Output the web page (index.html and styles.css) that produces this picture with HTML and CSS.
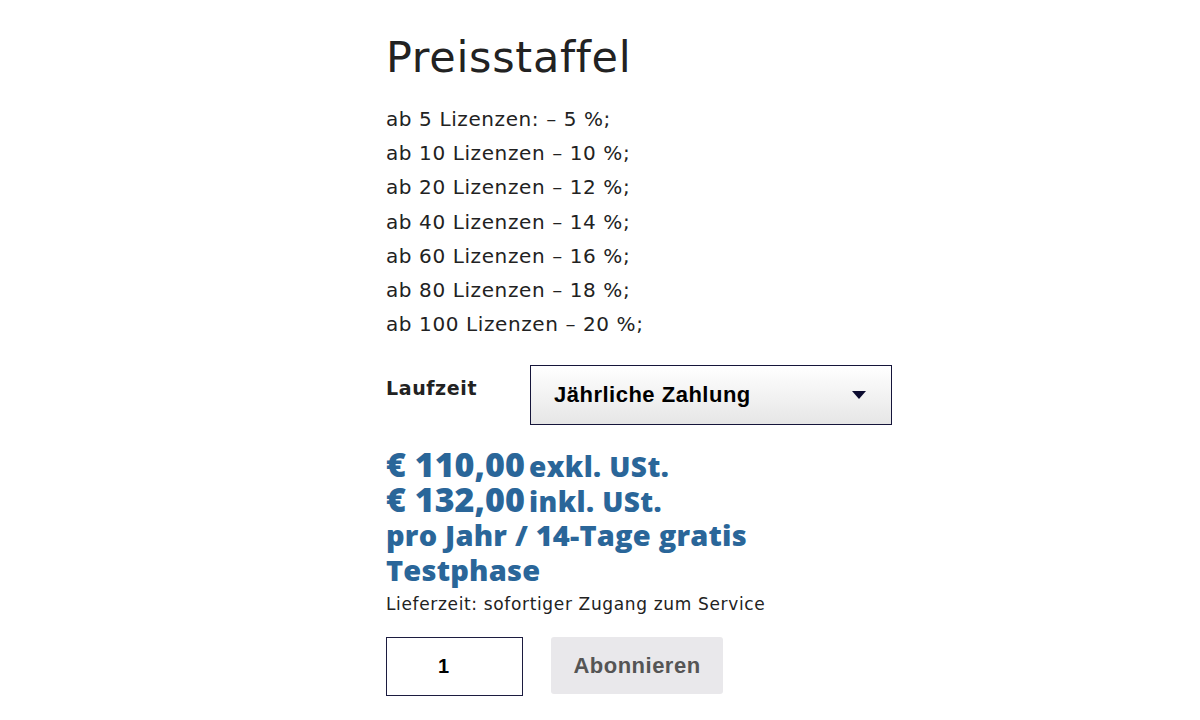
FILE: index.html
```html
<!DOCTYPE html>
<html lang="de">
<head>
<meta charset="utf-8">
<title>Preisstaffel</title>
<link rel="stylesheet" href="styles.css">
</head>
<body>
<div class="product">
  <h2 class="title">Preisstaffel</h2>
  <div class="tiers">
    <p>ab 5 Lizenzen: – 5 %;</p>
    <p>ab 10 Lizenzen – 10 %;</p>
    <p>ab 20 Lizenzen – 12 %;</p>
    <p>ab 40 Lizenzen – 14 %;</p>
    <p>ab 60 Lizenzen – 16 %;</p>
    <p>ab 80 Lizenzen – 18 %;</p>
    <p>ab 100 Lizenzen – 20 %;</p>
  </div>
  <div class="variation">
    <label class="var-label">Laufzeit</label>
    <div class="select">
      <span>Jährliche Zahlung</span>
      <svg class="caret" width="14" height="8" viewBox="0 0 14 8"><path d="M0 0H14L7 8Z" fill="#0c0c30"/></svg>
    </div>
  </div>
  <div class="price">
    <div class="pline"><span class="amount">€ 110,00</span> <span class="suffix">exkl. USt.</span></div>
    <div class="pline"><span class="amount">€ 132,00</span> <span class="suffix">inkl. USt.</span></div>
    <div class="period">pro Jahr / 14-Tage gratis Testphase</div>
  </div>
  <p class="delivery">Lieferzeit: sofortiger Zugang zum Service</p>
  <div class="cart">
    <div class="qty">1</div>
    <button class="subscribe">Abonnieren</button>
  </div>
</div>
</body>
</html>
```
FILE: styles.css
```css
html, body {
  margin: 0;
  padding: 0;
  background: #fff;
}
.product {
  margin-left: 386px;
  width: 506px;
  font-family: "DejaVu Sans", "Open Sans", sans-serif;
  color: #222;
}
.title {
  margin: 27px 0 0 0;
  font-size: 43px;
  font-weight: 400;
  line-height: 60px;
  letter-spacing: 0.7px;
}
.tiers {
  margin-top: 15px;
}
.tiers p {
  margin: 0;
  font-size: 20px;
  line-height: 34.2px;
  letter-spacing: 0.6px;
}
.variation {
  display: flex;
  align-items: flex-start;
  margin-top: 24px;
}
.var-label {
  flex: none;
  width: 144px;
  font-weight: 700;
  font-size: 19px;
  line-height: 46px;
  letter-spacing: 0.6px;
}
.select {
  flex: none;
  box-sizing: border-box;
  width: 362px;
  height: 60px;
  border: 1px solid #15153a;
  background: linear-gradient(#ffffff, #e6e6e6);
  display: flex;
  align-items: center;
  justify-content: space-between;
  padding: 0 25px 0 23px;
  font-family: "Liberation Sans", Arial, sans-serif;
  font-weight: 700;
  font-size: 22px;
  letter-spacing: 0.5px;
  color: #000;
}
.price {
  margin-top: 22px;
  color: #2a6699;
  font-family: "Open Sans", "DejaVu Sans", sans-serif;
  font-weight: 800;
  width: 420px;
}
.pline {
  height: 35px;
  line-height: 35px;
  white-space: nowrap;
}
.amount {
  font-size: 34px;
}
.suffix {
  font-size: 28px;
  letter-spacing: 0.4px;
}
.period {
  font-size: 29px;
  line-height: 35px;
  letter-spacing: 0.2px;
}
.delivery {
  margin: 2px 0 0 0;
  font-size: 17px;
  line-height: 30px;
  letter-spacing: 0.65px;
  color: #222;
}
.cart {
  display: flex;
  gap: 28px;
  margin-top: 18px;
}
.qty {
  box-sizing: border-box;
  width: 137px;
  height: 59px;
  border: 1px solid #1c1c40;
  display: flex;
  align-items: center;
  justify-content: center;
  padding-right: 22px;
  font-family: "Liberation Sans", Arial, sans-serif;
  font-weight: 700;
  font-size: 20px;
  color: #000;
}
.subscribe {
  width: 172px;
  height: 57px;
  border: 0;
  border-radius: 3px;
  background: #e9e8eb;
  color: #555;
  font-family: "Liberation Sans", Arial, sans-serif;
  font-weight: 700;
  font-size: 22px;
  letter-spacing: 0.5px;
}
```
